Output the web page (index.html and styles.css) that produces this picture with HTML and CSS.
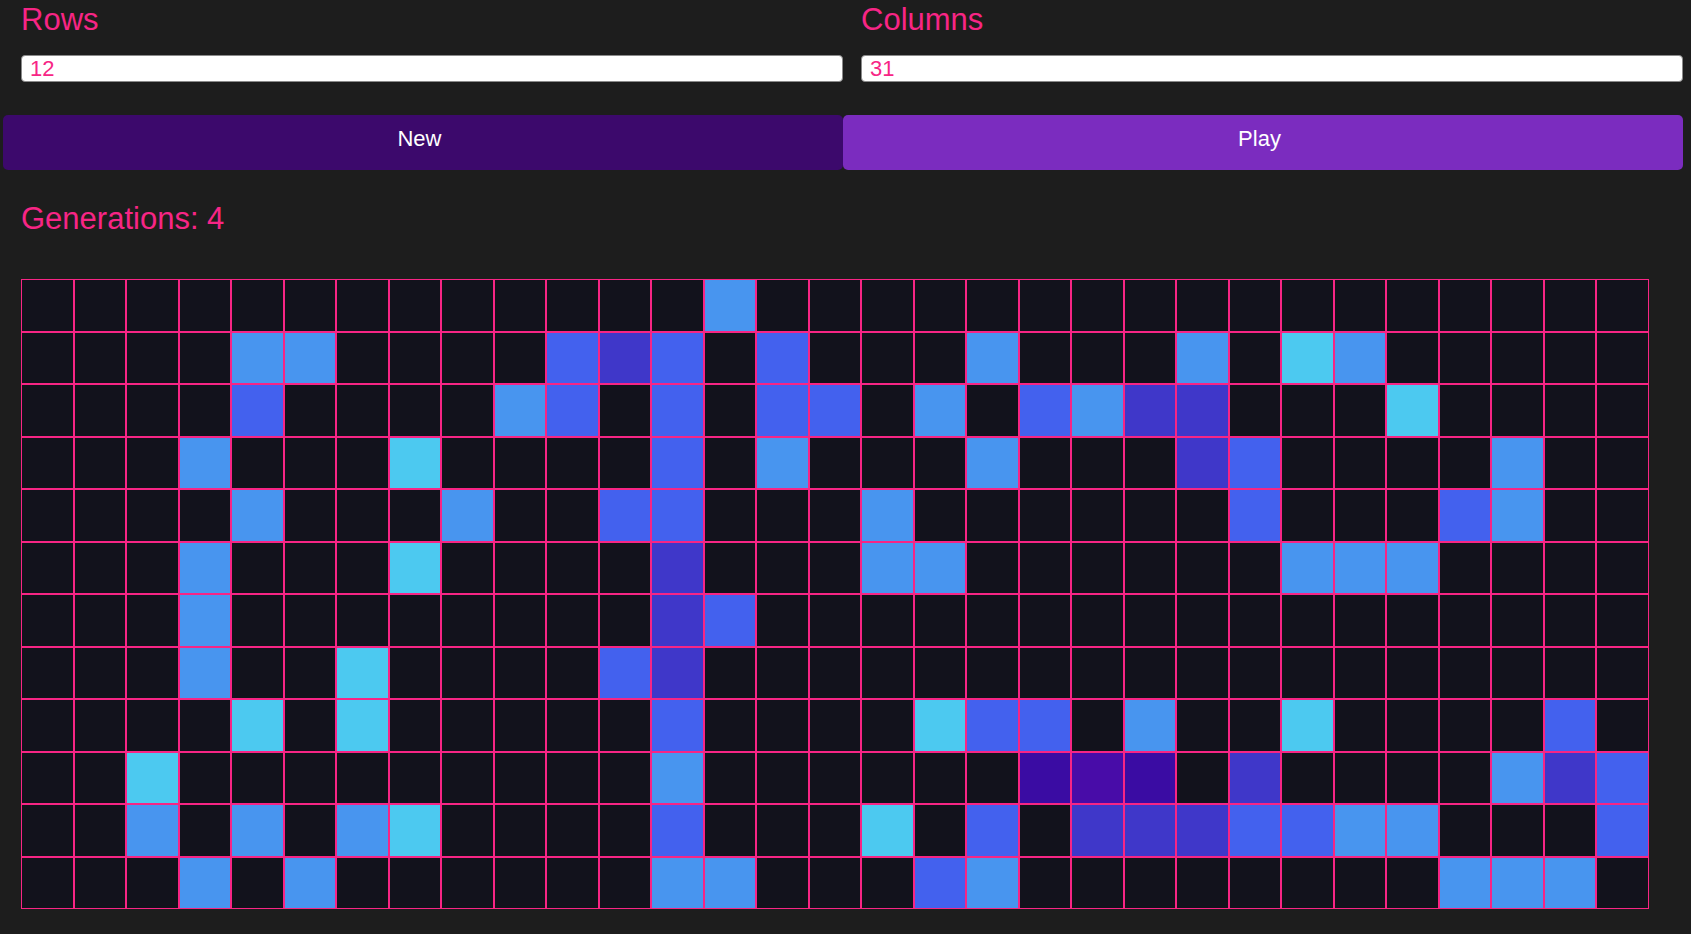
FILE: index.html
```html
<!DOCTYPE html>
<html>
<head>
<meta charset="utf-8">
<title>Game of Life</title>
<link rel="stylesheet" href="styles.css">
</head>
<body>
<div class="app">
  <div class="controls">
    <div class="field">
      <label class="label">Rows</label>
      <input class="num" type="text" value="12">
    </div>
    <div class="field">
      <label class="label">Columns</label>
      <input class="num" type="text" value="31">
    </div>
  </div>
  <div class="buttons">
    <button class="btn btn-new">New</button>
    <button class="btn btn-play">Play</button>
  </div>
  <h2 class="gens">Generations: 4</h2>
  <div class="board">
    <!-- row 0 -->
    <i></i><i></i><i></i><i></i><i></i><i></i><i></i><i></i><i></i><i></i><i></i><i></i><i></i><i class="b"></i><i></i><i></i><i></i><i></i><i></i><i></i><i></i><i></i><i></i><i></i><i></i><i></i><i></i><i></i><i></i><i></i><i></i>
    <!-- row 1 -->
    <i></i><i></i><i></i><i></i><i class="b"></i><i class="b"></i><i></i><i></i><i></i><i></i><i class="n"></i><i class="v"></i><i class="n"></i><i></i><i class="n"></i><i></i><i></i><i></i><i class="b"></i><i></i><i></i><i></i><i class="b"></i><i></i><i class="c"></i><i class="b"></i><i></i><i></i><i></i><i></i><i></i>
    <!-- row 2 -->
    <i></i><i></i><i></i><i></i><i class="n"></i><i></i><i></i><i></i><i></i><i class="b"></i><i class="n"></i><i></i><i class="n"></i><i></i><i class="n"></i><i class="n"></i><i></i><i class="b"></i><i></i><i class="n"></i><i class="b"></i><i class="v"></i><i class="v"></i><i></i><i></i><i></i><i class="c"></i><i></i><i></i><i></i><i></i>
    <!-- row 3 -->
    <i></i><i></i><i></i><i class="b"></i><i></i><i></i><i></i><i class="c"></i><i></i><i></i><i></i><i></i><i class="n"></i><i></i><i class="b"></i><i></i><i></i><i></i><i class="b"></i><i></i><i></i><i></i><i class="v"></i><i class="n"></i><i></i><i></i><i></i><i></i><i class="b"></i><i></i><i></i>
    <!-- row 4 -->
    <i></i><i></i><i></i><i></i><i class="b"></i><i></i><i></i><i></i><i class="b"></i><i></i><i></i><i class="n"></i><i class="n"></i><i></i><i></i><i></i><i class="b"></i><i></i><i></i><i></i><i></i><i></i><i></i><i class="n"></i><i></i><i></i><i></i><i class="n"></i><i class="b"></i><i></i><i></i>
    <!-- row 5 -->
    <i></i><i></i><i></i><i class="b"></i><i></i><i></i><i></i><i class="c"></i><i></i><i></i><i></i><i></i><i class="v"></i><i></i><i></i><i></i><i class="b"></i><i class="b"></i><i></i><i></i><i></i><i></i><i></i><i></i><i class="b"></i><i class="b"></i><i class="b"></i><i></i><i></i><i></i><i></i>
    <!-- row 6 -->
    <i></i><i></i><i></i><i class="b"></i><i></i><i></i><i></i><i></i><i></i><i></i><i></i><i></i><i class="v"></i><i class="n"></i><i></i><i></i><i></i><i></i><i></i><i></i><i></i><i></i><i></i><i></i><i></i><i></i><i></i><i></i><i></i><i></i><i></i>
    <!-- row 7 -->
    <i></i><i></i><i></i><i class="b"></i><i></i><i></i><i class="c"></i><i></i><i></i><i></i><i></i><i class="n"></i><i class="v"></i><i></i><i></i><i></i><i></i><i></i><i></i><i></i><i></i><i></i><i></i><i></i><i></i><i></i><i></i><i></i><i></i><i></i><i></i>
    <!-- row 8 -->
    <i></i><i></i><i></i><i></i><i class="c"></i><i></i><i class="c"></i><i></i><i></i><i></i><i></i><i></i><i class="n"></i><i></i><i></i><i></i><i></i><i class="c"></i><i class="n"></i><i class="n"></i><i></i><i class="b"></i><i></i><i></i><i class="c"></i><i></i><i></i><i></i><i></i><i class="n"></i><i></i>
    <!-- row 9 -->
    <i></i><i></i><i class="c"></i><i></i><i></i><i></i><i></i><i></i><i></i><i></i><i></i><i></i><i class="b"></i><i></i><i></i><i></i><i></i><i></i><i></i><i class="p"></i><i class="q"></i><i class="p"></i><i></i><i class="v"></i><i></i><i></i><i></i><i></i><i class="b"></i><i class="v"></i><i class="n"></i>
    <!-- row 10 -->
    <i></i><i></i><i class="b"></i><i></i><i class="b"></i><i></i><i class="b"></i><i class="c"></i><i></i><i></i><i></i><i></i><i class="n"></i><i></i><i></i><i></i><i class="c"></i><i></i><i class="n"></i><i></i><i class="v"></i><i class="v"></i><i class="v"></i><i class="n"></i><i class="n"></i><i class="b"></i><i class="b"></i><i></i><i></i><i></i><i class="n"></i>
    <!-- row 11 -->
    <i></i><i></i><i></i><i class="b"></i><i></i><i class="b"></i><i></i><i></i><i></i><i></i><i></i><i></i><i class="b"></i><i class="b"></i><i></i><i></i><i></i><i class="n"></i><i class="b"></i><i></i><i></i><i></i><i></i><i></i><i></i><i></i><i></i><i class="b"></i><i class="b"></i><i class="b"></i><i></i>
  </div>
</div>
</body>
</html>
```

FILE: styles.css
```css
html, body {
  margin: 0;
  padding: 0;
  background: #1d1d1d;
  font-family: "Liberation Sans", Arial, sans-serif;
}

.app {
  padding: 2px 8px 0 3px;
}

.controls,
.buttons {
  display: grid;
  grid-template-columns: 1fr 1fr;
}

.field {
  display: flex;
  flex-direction: column;
  padding-left: 18px;
}

.label {
  font-size: 31px;
  line-height: 36px;
  color: #f72585;
}

.num {
  margin-top: 17px;
  box-sizing: border-box;
  width: 100%;
  height: 27px;
  padding: 0 8px;
  border: 1px solid #8a8a8a;
  border-radius: 4px;
  background: #ffffff;
  color: #f72585;
  font-family: "Liberation Sans", Arial, sans-serif;
  font-size: 22px;
  line-height: 25px;
  outline: none;
}

.buttons {
  margin-top: 33px;
}

.btn {
  height: 55px;
  border: none;
  border-radius: 5px;
  color: #ffffff;
  font-family: "Liberation Sans", Arial, sans-serif;
  font-size: 22px;
  line-height: 48px;
  padding: 0 7px 7px 0;
  cursor: pointer;
}

.btn-new {
  background: #3c096c;
}

.btn-play {
  background: #7b2cbf;
}

.gens {
  margin: 31px 0 0 18px;
  font-size: 31px;
  font-weight: normal;
  line-height: 36px;
  color: #f72585;
}

.board {
  margin: 42px 0 0 18px;
  display: grid;
  grid-template-columns: repeat(31, 52.53px);
  grid-auto-rows: 52.5px;
  width: max-content;
}

.board i {
  display: block;
  box-sizing: border-box;
  border: 1px solid #f72585;
  background: #12121c;
}

.board i.c { background: #4cc9f0; }
.board i.b { background: #4895ef; }
.board i.n { background: #4361ee; }
.board i.v { background: #3f37c9; }
.board i.p { background: #3a0ca3; }
.board i.q { background: #480ca8; }
```
